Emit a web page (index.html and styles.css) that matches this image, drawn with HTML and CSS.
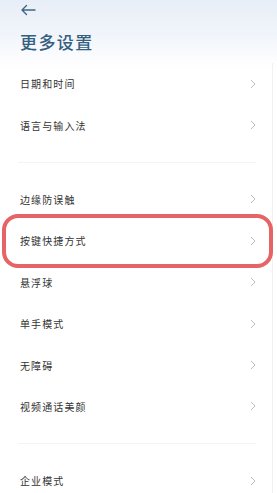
FILE: index.html
```html
<!DOCTYPE html>
<html lang="zh-CN">
<head>
    <meta charset="UTF-8">
    <meta name="viewport" content="width=device-width, initial-scale=1.0">
    <title>更多设置</title>
    <link rel="stylesheet" href="styles.css">
</head>
<body>

<div class="header">
    <svg class="back" width="16" height="12" viewBox="0 0 16 12">
        <path d="M15 6 H2 M6.5 1.5 L2 6 L6.5 10.5" fill="none" stroke="#3f6684" stroke-width="1.4" stroke-linecap="round" stroke-linejoin="round"/>
    </svg>
    <h1>更多设置</h1>
</div>

<div class="list">
    <div class="group">
        <div class="row"><span>日期和时间</span><svg class="chev" width="6" height="10" viewBox="0 0 6 10"><path d="M1 1 L5 5 L1 9" /></svg></div>
        <div class="row"><span>语言与输入法</span><svg class="chev" width="6" height="10" viewBox="0 0 6 10"><path d="M1 1 L5 5 L1 9" /></svg></div>
    </div>

    <div class="divider"><div class="line"></div></div>

    <div class="group">
        <div class="row"><span>边缘防误触</span><svg class="chev" width="6" height="10" viewBox="0 0 6 10"><path d="M1 1 L5 5 L1 9" /></svg></div>
        <div class="row marked"><span>按键快捷方式</span><svg class="chev" width="6" height="10" viewBox="0 0 6 10"><path d="M1 1 L5 5 L1 9" /></svg></div>
        <div class="row"><span>悬浮球</span><svg class="chev" width="6" height="10" viewBox="0 0 6 10"><path d="M1 1 L5 5 L1 9" /></svg></div>
        <div class="row"><span>单手模式</span><svg class="chev" width="6" height="10" viewBox="0 0 6 10"><path d="M1 1 L5 5 L1 9" /></svg></div>
        <div class="row"><span>无障碍</span><svg class="chev" width="6" height="10" viewBox="0 0 6 10"><path d="M1 1 L5 5 L1 9" /></svg></div>
        <div class="row"><span>视频通话美颜</span><svg class="chev" width="6" height="10" viewBox="0 0 6 10"><path d="M1 1 L5 5 L1 9" /></svg></div>
    </div>

    <div class="divider"><div class="line"></div></div>

    <div class="group">
        <div class="row"><span>企业模式</span><svg class="chev" width="6" height="10" viewBox="0 0 6 10"><path d="M1 1 L5 5 L1 9" /></svg></div>
    </div>
</div>

</body>
</html>
```

FILE: styles.css
```css
body {
    margin: 0;
    font-family: "Noto Sans CJK SC", "Noto Sans", sans-serif;
    background: linear-gradient(#e8eef7 0, #f1f5fb 35px, #fdfdfe 62px, #fff 75px);
    height: 493px;
    overflow: hidden;
}
.header {
    padding: 4px 0 0 20px;
}
.back {
    display: block;
}
h1 {
    margin: 14px 0 0;
    font-size: 17px;
    line-height: 24px;
    font-weight: 500;
    letter-spacing: 1.4px;
    color: #33607f;
}
.list {
    margin: 9px 4px 0 0;
    border-right: 1px solid #f1f1f4;
}
.row {
    position: relative;
    height: 41.4px;
    display: flex;
    align-items: center;
    justify-content: space-between;
    padding: 0 16px 0 20px;
    font-size: 10px;
    letter-spacing: 1.1px;
    color: #333;
}
.chev path {
    fill: none;
    stroke: #bdbdbd;
    stroke-width: 1;
}
.divider {
    height: 33px;
    display: flex;
    align-items: center;
    padding: 0 16px 0 18px;
}
.line {
    flex: 1;
    height: 1px;
    background: #f4f4f6;
}
.marked::after {
    content: "";
    position: absolute;
    top: -6px;
    bottom: -6px;
    left: 2px;
    right: -1px;
    border: 4px solid #e66466;
    border-radius: 16px;
}
```
